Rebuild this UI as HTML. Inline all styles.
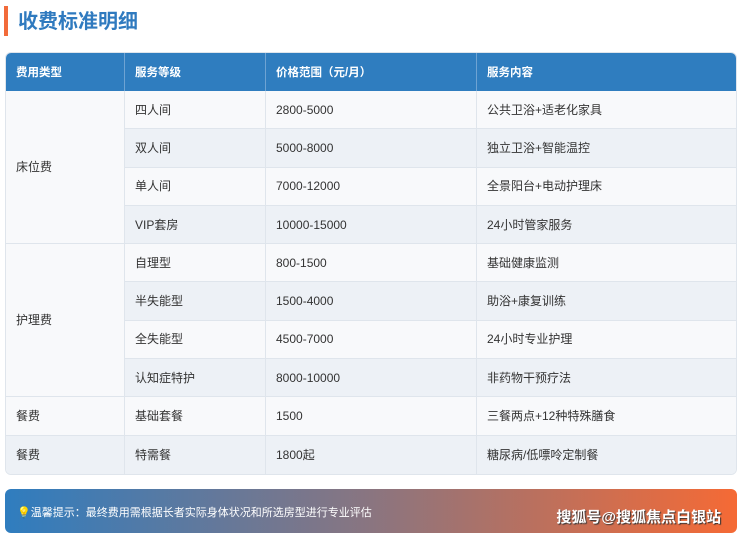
<!DOCTYPE html>
<html><head><meta charset="utf-8"><style>
*{margin:0;padding:0;box-sizing:border-box}
body{width:740px;height:534px;background:#fff;font-family:"Liberation Sans","Noto Sans CJK SC",sans-serif;position:relative;overflow:hidden}
.bar{position:absolute;left:4px;top:6px;width:4px;height:30px;background:#f26b3a}
h1{position:absolute;left:18px;top:7px;font-size:20px;font-weight:bold;color:#2f7abf;line-height:30px}
table{position:absolute;left:5px;top:52px;width:732px;border-collapse:separate;border-spacing:0;border-radius:6px;overflow:hidden;border:1px solid #dfe5ec;font-size:12px;color:#333}
th{background:#2f7dbf;color:#fff;font-weight:bold;text-align:left;height:38px;padding-left:10px;border-right:1px solid #6ea3d3;font-size:11.5px}
th:last-child,td:last-child{border-right:none}
td{height:38.3px;padding-left:10px;border-right:1px solid #dfe5ec;border-bottom:1px solid #dfe5ec;background:#f8f9fb;line-height:14px}
tr.e td{background:#edf1f6}
tr.e td.m{background:#f8f9fb}
tr:last-child td{border-bottom:none}
.note{position:absolute;left:5px;top:489px;width:732px;height:44px;border-radius:6px;background:linear-gradient(90deg,#2f7dbf,#8a7580 50%,#f56a35);color:#fff;font-size:11px}
.note .t{position:absolute;left:12px;top:15px}
.note .w{position:absolute;right:16px;top:17px;font-size:15px;font-weight:bold;text-shadow:1px 1px 1px #333}
</style></head><body>
<div class="bar"></div><h1>收费标准明细</h1>
<table>
<colgroup><col style="width:119px"><col style="width:141px"><col style="width:211px"><col></colgroup>
<tr><th>费用类型</th><th>服务等级</th><th>价格范围（元/月）</th><th>服务内容</th></tr>
<tr><td rowspan="4" class="m">床位费</td><td>四人间</td><td>2800-5000</td><td>公共卫浴+适老化家具</td></tr>
<tr class="e"><td>双人间</td><td>5000-8000</td><td>独立卫浴+智能温控</td></tr>
<tr><td>单人间</td><td>7000-12000</td><td>全景阳台+电动护理床</td></tr>
<tr class="e"><td>VIP套房</td><td>10000-15000</td><td>24小时管家服务</td></tr>
<tr><td rowspan="4" class="m">护理费</td><td>自理型</td><td>800-1500</td><td>基础健康监测</td></tr>
<tr class="e"><td>半失能型</td><td>1500-4000</td><td>助浴+康复训练</td></tr>
<tr><td>全失能型</td><td>4500-7000</td><td>24小时专业护理</td></tr>
<tr class="e"><td>认知症特护</td><td>8000-10000</td><td>非药物干预疗法</td></tr>
<tr><td>餐费</td><td>基础套餐</td><td>1500</td><td>三餐两点+12种特殊膳食</td></tr>
<tr class="e"><td>餐费</td><td>特需餐</td><td>1800起</td><td>糖尿病/低嘌呤定制餐</td></tr>
</table>
<div class="note"><span class="t"><span style="color:#f5c542">💡</span>温馨提示：最终费用需根据长者实际身体状况和所选房型进行专业评估</span><span class="w">搜狐号@搜狐焦点白银站</span></div>
</body></html>
